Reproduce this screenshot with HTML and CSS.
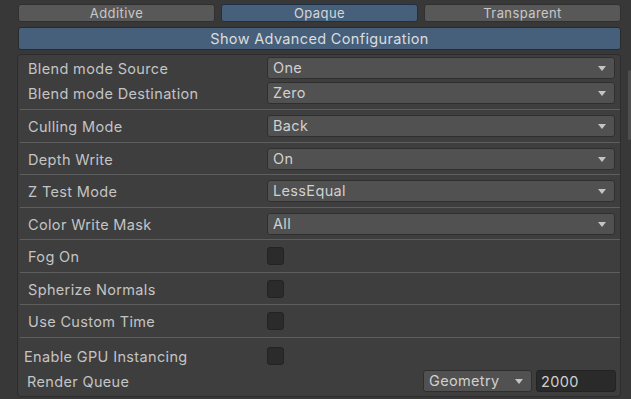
FILE: index.html
```html
<!DOCTYPE html>
<html lang="en">
<head>
    <meta charset="UTF-8">
    <title>Material Inspector</title>
    <link rel="stylesheet" href="styles.css">
</head>
<body>
    <div class="inspector">
        <!-- Blend presets -->
        <div class="tabs">
            <button class="tab">Additive</button>
            <button class="tab active">Opaque</button>
            <button class="tab">Transparent</button>
        </div>

        <button class="advanced">Show Advanced Configuration</button>

        <div class="panel">
            <div class="group group-blend">
                <div class="row">
                    <span class="label">Blend mode Source</span>
                    <div class="dropdown">One<span class="arrow"></span></div>
                </div>
                <div class="row">
                    <span class="label">Blend mode Destination</span>
                    <div class="dropdown">Zero<span class="arrow"></span></div>
                </div>
            </div>

            <div class="group">
                <div class="row">
                    <span class="label">Culling Mode</span>
                    <div class="dropdown">Back<span class="arrow"></span></div>
                </div>
            </div>

            <div class="group">
                <div class="row">
                    <span class="label">Depth Write</span>
                    <div class="dropdown">On<span class="arrow"></span></div>
                </div>
            </div>

            <div class="group">
                <div class="row">
                    <span class="label">Z Test Mode</span>
                    <div class="dropdown">LessEqual<span class="arrow"></span></div>
                </div>
            </div>

            <div class="group">
                <div class="row">
                    <span class="label">Color Write Mask</span>
                    <div class="dropdown">All<span class="arrow"></span></div>
                </div>
            </div>

            <div class="group">
                <div class="row">
                    <span class="label">Fog On</span>
                    <span class="checkbox"></span>
                </div>
            </div>

            <div class="group">
                <div class="row">
                    <span class="label">Spherize Normals</span>
                    <span class="checkbox"></span>
                </div>
            </div>

            <div class="group">
                <div class="row">
                    <span class="label">Use Custom Time</span>
                    <span class="checkbox"></span>
                </div>
            </div>

            <div class="group group-last">
                <div class="row">
                    <span class="label label-gpu">Enable GPU Instancing</span>
                    <span class="checkbox"></span>
                </div>
                <div class="row">
                    <span class="label label-queue">Render Queue</span>
                    <div class="queue">
                        <div class="dropdown dropdown-small">Geometry<span class="arrow"></span></div>
                        <div class="number">2000</div>
                    </div>
                </div>
            </div>
        </div>
    </div>

    <div class="scrollbar"><div class="thumb"></div></div>
</body>
</html>
```

FILE: styles.css
```css
/* styles.css */

body {
    background-color: #383838;
    font-family: 'Inter', 'Liberation Sans', sans-serif;
    color: #c4c4c4;
    margin: 0;
    height: 399px;
    overflow: hidden;
}

.inspector {
    padding: 4px 10px 0 18px;
}

.tabs {
    display: flex;
    gap: 6px;
}

.tab {
    flex: 1;
    height: 18px;
    padding: 0;
    font-family: inherit;
    font-size: 13px;
    letter-spacing: 0.4px;
    color: #c8c8c8;
    background-color: #585858;
    border: 1px solid #303030;
    border-radius: 3px;
}

.tab.active {
    background-color: #46607c;
    border-color: #1f2f44;
    color: #d6d6d6;
}

.advanced {
    display: block;
    width: 100%;
    height: 23px;
    margin-top: 5px;
    padding: 0;
    font-family: inherit;
    font-size: 14.5px;
    letter-spacing: 0.35px;
    color: #dcdcdc;
    background-color: #46607c;
    border: 1px solid #2a2a2a;
    border-radius: 3px;
}

.panel {
    margin: 4px 0 0 -1px;
    background-color: #3e3e3e;
    border: 1px solid #2c2c2c;
    border-radius: 4px;
    padding-left: 2px;
}

.group {
    border-top: 1px solid #5e5e5e;
    padding: 5px 5px 5px 0;
}

.group:nth-child(odd) {
    padding-bottom: 4px;
}

.group-blend {
    border-top: none;
    padding: 1px 5px 3px 0;
    display: flex;
    flex-direction: column;
    gap: 1px;
}

.group-blend .row {
    height: 24px;
}

.group-last {
    padding: 7px 4px 3px 0;
    display: flex;
    flex-direction: column;
    gap: 3px;
}

.row {
    display: flex;
    align-items: center;
    height: 22px;
}

.label {
    flex: 0 0 239px;
    padding-left: 8px;
    font-size: 14.5px;
    letter-spacing: 0.35px;
    white-space: nowrap;
}

.label-gpu {
    padding-left: 4px;
    flex-basis: 243px;
}

.label-queue {
    padding-left: 7px;
    flex-basis: 240px;
}

.dropdown {
    position: relative;
    flex: 1;
    height: 22px;
    box-sizing: border-box;
    padding-left: 5px;
    line-height: 20px;
    font-size: 14.5px;
    letter-spacing: 0.35px;
    color: #d0d0d0;
    background-color: #515151;
    border: 1px solid #2f2f2f;
    border-radius: 3px;
}

/* dropdown triangle */
.arrow {
    position: absolute;
    right: 8px;
    top: 8px;
    width: 0;
    height: 0;
    border-left: 4px solid transparent;
    border-right: 4px solid transparent;
    border-top: 5px solid #c4c4c4;
}

.checkbox {
    width: 17px;
    height: 18px;
    box-sizing: border-box;
    background-color: #2b2b2b;
    border: 1px solid #232323;
    border-radius: 3px;
}

.queue {
    flex: 1;
    display: flex;
    justify-content: flex-end;
    gap: 4px;
}

.dropdown-small {
    flex: 0 0 109px;
}

.number {
    flex: 0 0 80px;
    height: 22px;
    box-sizing: border-box;
    padding-left: 4px;
    line-height: 21px;
    font-size: 14.5px;
    letter-spacing: 0.35px;
    color: #d0d0d0;
    background-color: #2a2a2a;
    border: 1px solid #232323;
    border-radius: 3px;
}

/* inspector scrollbar on the right edge */
.scrollbar {
    position: absolute;
    top: 54px;
    right: 0;
    width: 4px;
    height: 345px;
}

.thumb {
    margin-top: 16px;
    margin-left: 1px;
    width: 3px;
    height: 70px;
    background-color: #4e4e4e;
    border-radius: 2px;
}
```
